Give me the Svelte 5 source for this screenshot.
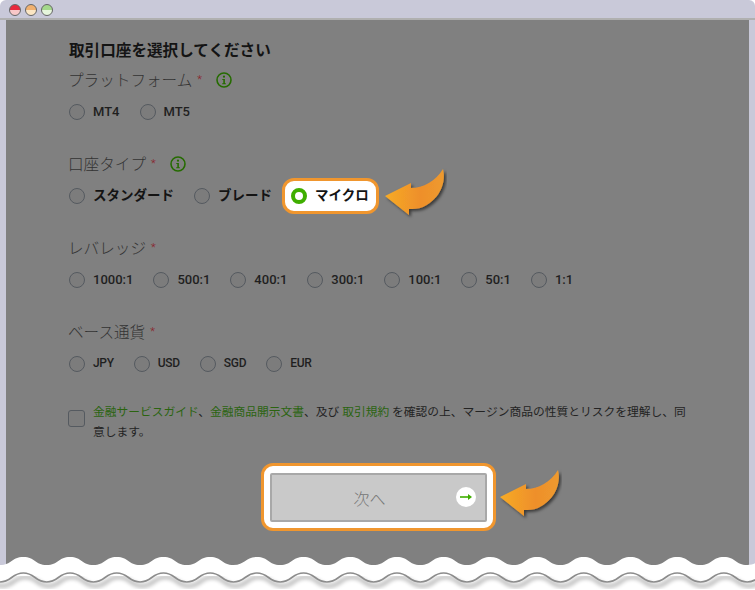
<script>
  const groups = [
    { label: 'プラットフォーム', info: true, name: 'platform', items: ['MT4', 'MT5'] },
    { label: '口座タイプ', info: true, name: 'type', items: ['スタンダード', 'ブレード', 'マイクロ'], bold: true, picked: 'マイクロ' },
    { label: 'レバレッジ', name: 'leverage', items: ['1000:1', '500:1', '400:1', '300:1', '100:1', '50:1', '1:1'] },
    { label: 'ベース通貨', name: 'currency', small: true, items: ['JPY', 'USD', 'SGD', 'EUR'] }
  ];

  // wavy torn edge at the bottom of the screenshot
  const period = 46.7;
  function wave(y, amp) {
    let d = `M-${period} ${y + amp}`;
    for (let x = -period; x < 780; x += period) {
      d += ` c${period * 0.25} 0 ${period * 0.25} ${-amp * 2} ${period * 0.5} ${-amp * 2}`;
      d += ` s${period * 0.25} ${amp * 2} ${period * 0.5} ${amp * 2}`;
    }
    return d;
  }
  const topEdge = wave(561, 4);
  const lowEdge = wave(577.5, 4.5);
</script>

{#snippet arrow()}
  <svg class="arrow" width="62" height="52" viewBox="0 0 62 52">
    <defs>
      <linearGradient id="arrowFill" x1="0" x2="1" y1="0" y2="0">
        <stop offset="0" stop-color="#f7ab25" />
        <stop offset="0.6" stop-color="#ee8f2b" />
        <stop offset="1" stop-color="#ee9a2e" />
      </linearGradient>
      <filter id="arrowShadow" x="-20%" y="-20%" width="150%" height="150%">
        <feDropShadow dx="2" dy="2" stdDeviation="1.6" flood-color="#000" flood-opacity="0.55" />
      </filter>
    </defs>
    <path
      d="M0 28 L26 15 L26 20 C38 20 51 13 58 1 C61 12 57 30 38 39 C33 41 28 41 24 41 L24 47 Z"
      fill="url(#arrowFill)"
      filter="url(#arrowShadow)"
    />
  </svg>
{/snippet}

<div class="window">
  <div class="titlebar">
    <span class="light red"></span>
    <span class="light amber"></span>
    <span class="light green"></span>
  </div>
  <main class="panel">
    <h1>取引口座を選択してください</h1>
    {#each groups as group}
      <section>
        <div class="label">
          {group.label}<span class="star">*</span>
          {#if group.info}
            <svg class="info" width="16" height="16" viewBox="0 0 16 16">
              <circle cx="8" cy="8" r="7" fill="none" stroke="#256b00" stroke-width="1.6" />
              <circle cx="8" cy="4.7" r="1.1" fill="#256b00" />
              <path d="M6.3 7h2.6v4.2h1v1.1H6.2v-1.1h1.1V8.1h-1z" fill="#256b00" />
            </svg>
          {/if}
        </div>
        <div class="options">
          {#each group.items as item}
            {#if item === group.picked}
              <div class="option picked" class:bold={group.bold}>
                <span class="radio on"></span><span class="text">{item}</span>
              </div>
              <div class="arrow-slot">{@render arrow()}</div>
            {:else}
              <div class="option" class:bold={group.bold} class:small={group.small}>
                <span class="radio"></span><span class="text">{item}</span>
              </div>
            {/if}
          {/each}
        </div>
      </section>
    {/each}

    <div class="agree">
      <span class="box"></span>
      <p>
        <a href="#guide">金融サービスガイド</a>、<a href="#docs">金融商品開示文書</a>、及び <a href="#terms">取引規約</a> を確認の上、マージン商品の性質とリスクを理解し、同意します。
      </p>
    </div>

    <div class="submit">
      <div class="ring">
        <button type="button">
          次へ
          <span class="go">
            <svg width="12" height="8" viewBox="0 0 12 8">
              <path d="M0 4h10" stroke="#3fae00" stroke-width="1.6" />
              <path d="M8 1l4 3-4 3z" fill="#3fae00" />
            </svg>
          </span>
        </button>
      </div>
      <div class="arrow-slot big">{@render arrow()}</div>
    </div>
  </main>

  <svg class="torn" width="755" height="590" viewBox="0 0 755 590">
    <defs>
      <filter id="tornShadow" x="-5%" y="-5%" width="110%" height="130%">
        <feGaussianBlur stdDeviation="2" />
      </filter>
    </defs>
    <path d="{topEdge} V590 H-60 Z" fill="#fff" />
    <path d={lowEdge} transform="translate(2 4)" fill="none" stroke="#000" stroke-width="3" opacity="0.35" filter="url(#tornShadow)" />
    <path d={lowEdge} fill="none" stroke="#8c8c8c" stroke-width="1.6" />
  </svg>
</div>

<style>
  :global(body) {
    margin: 0;
    background: #fff;
  }
  .window {
    position: relative;
    width: 755px;
    height: 590px;
    overflow: hidden;
    border-radius: 6px 6px 0 0;
    background: #c9c9d9;
    font-family: Roboto, "Noto Sans CJK JP", sans-serif;
    color: #1c1c1c;
  }
  .titlebar {
    display: flex;
    gap: 4px;
    align-items: center;
    height: 20px;
    padding: 2px 0 0 9px;
    box-sizing: border-box;
    border-bottom: 2px solid #b0b0b0;
  }
  .light {
    width: 12px;
    height: 12px;
    border-radius: 50%;
    border: 1px solid #666;
    box-sizing: border-box;
  }
  .red { background: linear-gradient(#e8283c 50%, #f8c8c8 55%); }
  .amber { background: linear-gradient(#f0b070 50%, #fbe6c4 55%); }
  .green { background: linear-gradient(#a4d88c 50%, #e6f6dc 55%); }
  .panel {
    margin: 0 6px;
    height: 570px;
    box-sizing: border-box;
    padding: 20px 62px 0;
    background: #808080;
  }
  h1 {
    margin: 0 0 0 1px;
    font-size: 15.6px;
    line-height: 22px;
    font-weight: 700;
    color: #141414;
  }
  section {
    margin-top: 5px;
    margin-bottom: 27px;
  }
  section + section {
    margin-top: 0;
  }
  .label {
    display: flex;
    align-items: center;
    height: 26px;
    box-sizing: border-box;
    padding-bottom: 2px;
    font-size: 15.6px;
    font-weight: 300;
    color: #333;
  }
  .star {
    margin-left: 5px;
    font-size: 11px;
    color: #8a1c28;
  }
  .info {
    margin: 2px 0 0 14px;
  }
  .options {
    display: flex;
    align-items: center;
    gap: 20px;
    height: 24px;
    margin-top: 7px;
    padding-left: 1px;
  }
  .option {
    display: flex;
    align-items: center;
    gap: 8px;
    font-size: 13px;
    font-weight: 500;
    color: #1f1f1f;
    white-space: nowrap;
  }
  .option.small {
    font-size: 12px;
    letter-spacing: -0.3px;
  }
  .option.bold {
    font-size: 13.5px;
    font-weight: 700;
    color: #141414;
  }
  .radio {
    width: 16px;
    height: 16px;
    box-sizing: border-box;
    border: 1px solid #555a60;
    border-radius: 50%;
    background: #7c7c7c;
  }
  .radio.on {
    border: 4px solid #3fae00;
    background: #fff;
  }
  .text {
    position: relative;
    top: -1px;
  }
  .bold .text {
    top: -2px;
  }
  .picked {
    height: 36px;
    box-sizing: border-box;
    margin-left: -10px;
    padding: 0 7px 0 6px;
    border: 3px solid #f0962e;
    border-radius: 12px;
    background: #fff;
  }
  .arrow-slot {
    position: relative;
    width: 0;
    height: 0;
  }
  .arrow {
    position: absolute;
    left: -14px;
    top: -28px;
  }
  .big .arrow {
    left: 4px;
  }
  .agree {
    display: flex;
    gap: 8px;
    margin-top: 1px;
  }
  .box {
    flex: none;
    width: 17px;
    height: 17px;
    margin-top: 7px;
    box-sizing: border-box;
    border: 1px solid #555a60;
    border-radius: 3px;
    background: #7c7c7c;
  }
  .agree p {
    margin: 0;
    width: 598px;
    font-size: 11.75px;
    line-height: 19.5px;
    color: #232323;
  }
  .agree a {
    color: #2b6410;
    text-decoration: none;
  }
  .submit {
    display: flex;
    align-items: center;
    margin: 21px 0 0 193px;
  }
  .ring {
    width: 235px;
    height: 68px;
    box-sizing: border-box;
    padding: 7px 6px 6px;
    border: 3px solid #f0962e;
    border-radius: 12px;
    background: #fff;
  }
  button {
    position: relative;
    width: 100%;
    height: 100%;
    padding: 0 18px 0 0;
    border: 2px solid #a8a8a8;
    border-radius: 2px;
    background: #c9c9c9;
    color: #767676;
    font: 300 16px "Noto Sans CJK JP", sans-serif;
  }
  .go {
    position: absolute;
    right: 9px;
    top: 12px;
    display: flex;
    align-items: center;
    justify-content: center;
    width: 20px;
    height: 20px;
    border-radius: 50%;
    background: #fff;
  }
  .torn {
    position: absolute;
    left: 0;
    top: 0;
    pointer-events: none;
  }
</style>
